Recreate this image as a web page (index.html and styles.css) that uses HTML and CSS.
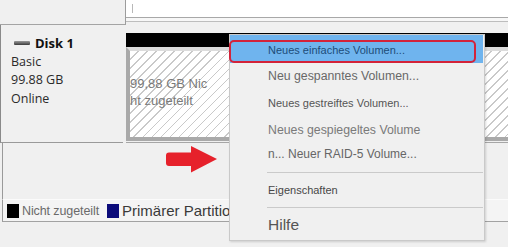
FILE: index.html
```html
<!DOCTYPE html>
<html lang="de">
<head>
<meta charset="utf-8">
<title>Datenträgerverwaltung</title>
<link rel="stylesheet" href="styles.css">
</head>
<body>
<div class="screen">
  <div class="top">
    <div class="top-left"></div>
    <div class="top-right">
      <div class="top-field"><span class="caret"></span></div>
      <div class="top-gap"></div>
    </div>
  </div>

  <div class="disk">
    <div class="disk-label">
      <div class="disk-name"><span class="disk-icon"></span>Disk 1</div>
      <div>Basic</div>
      <div>99.88 GB</div>
      <div>Online</div>
    </div>
    <div class="part">
      <div class="part-bar"></div>
      <div class="hatch">
        <div class="hatch-text">99,88 GB Nic<br>ht zugeteilt</div>
      </div>
    </div>
  </div>

  <div class="empty"></div>

  <div class="legend">
    <span class="swatch swatch-black"></span>
    <span class="legend-text">Nicht zugeteilt</span>
    <span class="swatch swatch-navy"></span>
    <span class="legend-text legend-big">Primärer Partition</span>
  </div>
  <div class="bottom"></div>

  <svg class="arrow" width="56" height="30" viewBox="0 0 56 30">
    <path d="M5 7.5 H27 V1 L53 14 L27 27.5 V21 H5 Q2 21 2 18 V10.5 Q2 7.5 5 7.5 Z" fill="#e6212b"/>
  </svg>

  <div class="menu">
    <div class="item item-hl">Neues einfaches Volumen...<span class="mark"></span></div>
    <div class="item item-big">Neu gespanntes Volumen...</div>
    <div class="item item-dark">Neues gestreiftes Volumen...</div>
    <div class="item item-big item-light">Neues gespiegeltes Volume</div>
    <div class="item item-raid">n... Neuer RAID-5 Volume...</div>
    <div class="sep sep-first"></div>
    <div class="item item-props">Eigenschaften</div>
    <div class="sep"></div>
    <div class="item item-help">Hilfe</div>
  </div>
</div>
</body>
</html>
```

FILE: styles.css
```css
html, body {
  margin: 0;
  padding: 0;
}
body {
  background: #f0f0f0;
  font-family: "Liberation Sans", Arial, sans-serif;
}
.screen {
  position: relative;
  width: 508px;
  height: 247px;
  overflow: hidden;
  background: #f0f0f0;
}

/* top strip */
.top {
  display: flex;
  height: 25px;
}
.top-left {
  width: 126px;
  height: 25px;
  box-sizing: border-box;
  border-right: 1px solid #9c9c9c;
  border-bottom: 1px solid #a4a4a4;
  background: #f0f0f0;
}
.top-right {
  flex: 1;
  display: flex;
  flex-direction: column;
}
.top-field {
  height: 18px;
  background: #fff;
  border-bottom: 1px solid #a8a8a8;
  padding-left: 6px;
  box-sizing: border-box;
  display: flex;
  align-items: center;
}
.caret {
  width: 1px;
  height: 9px;
  background: #b8b8b8;
}
.top-gap {
  height: 3px;
  background: #f7f7f7;
  border-bottom: 1px solid #bdbdbd;
}

/* disk row */
.disk {
  display: flex;
  height: 118px;
}
.disk-label {
  width: 123px;
  box-sizing: border-box;
  border-left: 1px solid #8a8a8a;
  border-bottom: 1px solid #9a9a9a;
  padding: 9px 0 0 10px;
  font-family: "Open Sans", "Noto Sans", sans-serif;
  font-size: 12.5px;
  line-height: 18.5px;
  color: #2a2a2a;
}
.disk-name {
  display: flex;
  align-items: center;
  gap: 5px;
  font-weight: 700;
  font-size: 13px;
  color: #111;
}
.disk-icon {
  margin-left: 3px;
  width: 16px;
  height: 4px;
  border-radius: 1px;
  background: linear-gradient(#9a9a9a, #3a3a3a);
}
.part {
  flex: 1;
  display: flex;
  flex-direction: column;
  padding-top: 8px;
  margin-left: 3px;
  border-bottom: 1px solid #a6a6a6;
  box-sizing: border-box;
}
.part-bar {
  height: 14px;
  background: #000;
}
.hatch {
  height: 94px;
  box-sizing: border-box;
  border-left: 4px solid #a9a9a9;
  border-bottom: 4px solid #a9a9a9;
  border-top: 4px solid #dcdcdc;
  background: repeating-linear-gradient(135deg, #ffffff 0 5.3px, #c9c9c9 5.3px 6.4px);
}
.hatch-text {
  padding-top: 24px;
  font-size: 13px;
  line-height: 17px;
  color: #7a7a7a;
}

/* empty area + legend */
.empty {
  height: 56px;
  margin-left: 2px;
  border-left: 1px solid #9a9a9a;
}
.legend {
  height: 23px;
  box-sizing: border-box;
  margin-left: 2px;
  border-left: 1px solid #9a9a9a;
  border-top: 1px solid #fbfbfb;
  border-bottom: 1px solid #a2a2a2;
  background: #f4f4f4;
  display: flex;
  align-items: center;
  padding-left: 4px;
}
.swatch {
  width: 12px;
  height: 14px;
  flex: none;
}
.swatch-black {
  background: #000;
}
.swatch-navy {
  background: #0b0b7a;
  margin-left: 8px;
}
.legend-text {
  margin-left: 3px;
  font-size: 12.5px;
  letter-spacing: -0.1px;
  color: #6a6a6a;
  white-space: nowrap;
}
.legend-big {
  font-size: 15px;
  letter-spacing: 0;
  color: #3a3a3a;
}
.bottom {
  height: 25px;
}

/* overlays */
.arrow {
  position: absolute;
  left: 164px;
  top: 145px;
}
.menu {
  position: absolute;
  left: 229px;
  top: 34px;
  width: 256px;
  height: 207px;
  box-sizing: border-box;
  background: #f0f0f0;
  border: 1px solid #c9c9c9;
  box-shadow: 1px 1px 2px rgba(0, 0, 0, 0.15);
}
.item {
  position: relative;
  height: 27px;
  line-height: 27px;
  padding-left: 38px;
  font-size: 11px;
  color: #5a5a5a;
  white-space: nowrap;
}
.item-hl {
  height: 28px;
  line-height: 26px;
  padding-top: 2px;
  box-sizing: border-box;
  margin-right: 1px;
  background: #6fb4ee;
  color: #1d4c78;
}
.mark {
  position: absolute;
  left: -1px;
  top: 5px;
  width: 247px;
  height: 23px;
  box-sizing: border-box;
  border: 2.5px solid #d3233a;
  border-radius: 5px;
}
.item-big {
  font-size: 12.3px;
  color: #686868;
}
.item-dark {
  color: #555;
}
.item-light {
  color: #7a7a7a;
}
.item-raid {
  height: 20px;
  line-height: 20px;
  font-size: 12px;
  color: #666;
}
.sep {
  height: 1px;
  margin: 0 1px 0 37px;
  background: #cacaca;
}
.sep-first {
  margin-top: 8px;
}
.item-props {
  height: 34px;
  line-height: 34px;
  font-size: 11px;
  color: #474747;
}
.item-help {
  height: 33px;
  line-height: 33px;
  font-size: 15.5px;
  color: #555;
}
```
